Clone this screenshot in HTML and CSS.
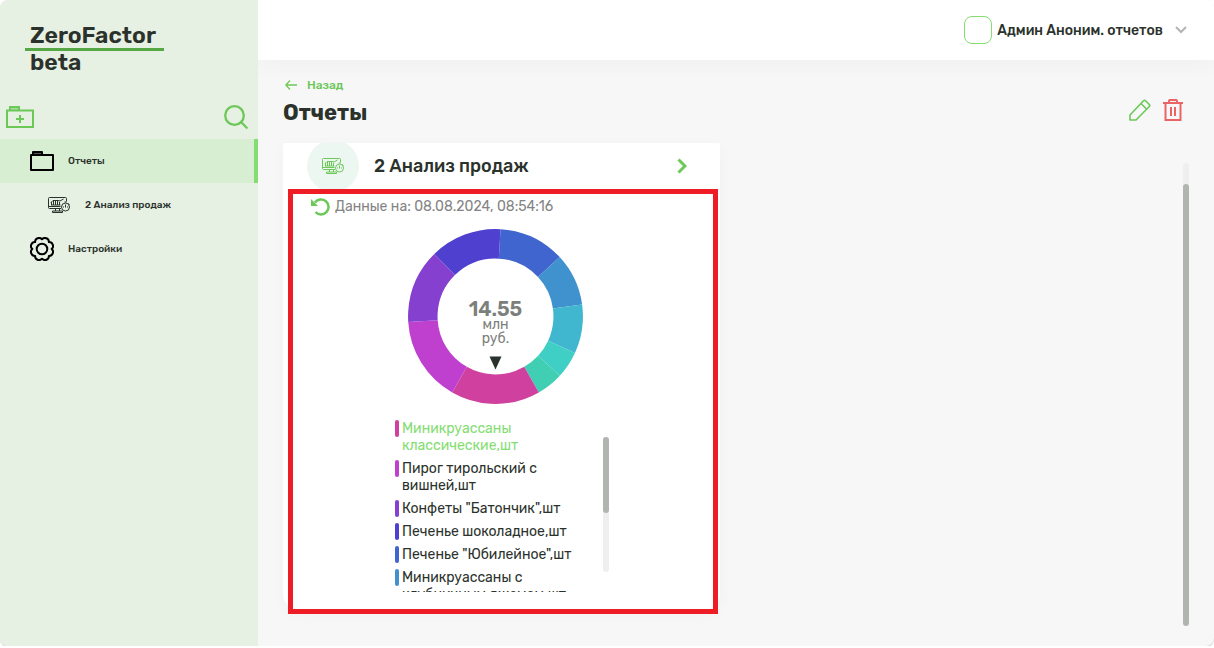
FILE: index.html
```html
<!DOCTYPE html>
<html lang="ru">
<head>
<meta charset="utf-8">
<title>ZeroFactor beta</title>
<link rel="stylesheet" href="styles.css">
</head>
<body>
<svg class="sprite" aria-hidden="true">
  <symbol id="i-analysis" viewBox="0 0 22 16">
    <g fill="none" stroke="currentColor" stroke-width="1">
      <path d="M13 11.500H1.500a1 1 0 0 1-1-1v-9a1 1 0 0 1 1-1h16a1 1 0 0 1 1 1v3M.5 9.500h12M7.500 11.500v2.500M11.500 11.500v2.500M4.500 15.500v-1.500h10v1.500z"/>
      <path d="M3 5.500l2-2h5l2 .500 3.500-2M3.500 8V5M5.500 8V4M7.500 8V4M9.500 8V4M11.500 8V5M3 8h9.500"/>
      <circle cx="17.500" cy="10" r="4"/><path d="M17.500 10.500V7.500M16.500 5h2M15 10h1M19 10h1M20.500 6.500l1 1"/>
    </g>
  </symbol>
</svg>
<div class="app">
  <aside class="sidebar">
    <div class="brand"><span class="brand-name">ZeroFactor</span><span class="brand-tag">beta</span></div>
    <div class="tools">
      <button class="icon-btn" type="button" aria-label="Добавить папку">
        <svg width="28" height="22" viewBox="0 0 28 22"><path d="M4 4V1h9v3z" fill="#a8dd9d"/><path d="M1 4.500h26v16.500H1zM4 4V1h9v3" fill="none" stroke="#6cc857" stroke-width="2"/><path d="M10 13h8M14 9v8" stroke="#6cc857" stroke-width="2"/></svg>
      </button>
      <button class="icon-btn" type="button" aria-label="Поиск">
        <svg width="24" height="24" viewBox="0 0 24 24"><g fill="none" stroke="#6cc857" stroke-width="2.300"><circle cx="10.500" cy="10.500" r="9.300"/><path d="M17 17l5.700 5.700" stroke-linecap="round"/></g></svg>
      </button>
    </div>
    <nav class="menu">
      <a class="menu-item active" href="#">
        <svg width="24" height="20" viewBox="0 0 24 20"><path d="M3 4V1h9v3z" fill="#555"/><path d="M1 4h22v15H1zM3 4V1h9v3" fill="none" stroke="#000" stroke-width="2" stroke-linejoin="round"/></svg>
        <span>Отчеты</span>
      </a>
      <a class="menu-item nested" href="#">
        <svg width="22" height="16"><use href="#i-analysis"/></svg>
        <span>2 Анализ продаж</span>
      </a>
      <a class="menu-item" href="#">
        <svg width="24" height="24" viewBox="0 0 24 24"><g fill="none" stroke="#000" stroke-width="2" stroke-linejoin="round"><circle cx="12" cy="12" r="5.300"/><path d="M12 2.300C14.500-.5 19.100 1.400 18.900 5.100C22.600 4.900 24.500 9.500 21.700 12C24.500 14.500 22.600 19.100 18.900 18.900C19.100 22.600 14.500 24.500 12 21.700C9.500 24.500 4.900 22.600 5.100 18.900C1.400 19.100-.5 14.500 2.300 12C-.5 9.500 1.400 4.900 5.100 5.100C4.900 1.400 9.500-.5 12 2.300Z"/></g></svg>
        <span>Настройки</span>
      </a>
    </nav>
  </aside>
  <div class="content">
    <header class="topbar">
      <button class="user" type="button">
        <span class="avatar"></span>
        <span class="user-name">Админ Аноним. отчетов</span>
        <svg width="12" height="8" viewBox="0 0 12 8"><path d="M1 1l5 5 5-5" fill="none" stroke="#b0b6af" stroke-width="2"/></svg>
      </button>
    </header>
    <main class="page">
      <div class="page-head">
        <div>
          <a class="back" href="#"><svg width="12" height="10" viewBox="0 0 12 10"><path d="M5 .500L.800 5 5 9.500M1 5h11" fill="none" stroke="#6cc857" stroke-width="1.300"/></svg>Назад</a>
          <h1>Отчеты</h1>
        </div>
        <div class="actions">
          <button class="icon-btn" type="button" aria-label="Редактировать">
            <svg width="22" height="22" viewBox="0 0 22 22"><path d="M1 21v-5L14.500 1.700q1-1 2 0l3.800 3.800q1 1 0 2L7 21zM12 4.500l5.700 5.700" fill="none" stroke="#6cc857" stroke-width="1.600" stroke-linejoin="round"/></svg>
          </button>
          <button class="icon-btn" type="button" aria-label="Удалить">
            <svg width="20" height="22" viewBox="0 0 20 22"><g fill="none" stroke="#eb6464" stroke-width="2"><path d="M0 4h20M2.500 4v17h15V4M6 4V2q0-1 1-1h6q1 0 1 1v2M8 8v9M12 8v9"/></g></svg>
          </button>
        </div>
      </div>
      <div class="page-body">
        <section class="card">
          <a class="card-head" href="#">
            <span class="badge"><svg width="22" height="16"><use href="#i-analysis"/></svg></span>
            <span class="card-title">2 Анализ продаж</span>
            <svg width="10" height="16" viewBox="0 0 10 16"><path d="M1.500 1.500L8 8l-6.500 6.500" fill="none" stroke="#6cc857" stroke-width="3"/></svg>
          </a>
          <div class="updated">
            <svg width="20" height="18" viewBox="0 0 20 18"><path d="M4 4.500A7.500 7.500 0 1 1 4.500 14" fill="none" stroke="#6cc857" stroke-width="2.500"/><path d="M0 1v7h7z" fill="#6cc857"/></svg>
            <span>Данные на: 08.08.2024, 08:54:16</span>
          </div>
          <div class="chart">
            <svg class="donut" viewBox="0 0 175 175">
              <g fill="none" stroke-width="29.500" transform="rotate(-86.700 87.500 87.500)">
                <circle cx="87.500" cy="87.500" r="72.700" stroke="#4065cf" pathLength="360" stroke-dasharray="43.900 360"/>
                <circle cx="87.500" cy="87.500" r="72.700" stroke="#4092cf" pathLength="360" stroke-dasharray="34.900 360" stroke-dashoffset="-43.900"/>
                <circle cx="87.500" cy="87.500" r="72.700" stroke="#40b7cf" pathLength="360" stroke-dasharray="32.600 360" stroke-dashoffset="-78.800"/>
                <circle cx="87.500" cy="87.500" r="72.700" stroke="#40cfc5" pathLength="360" stroke-dasharray="18 360" stroke-dashoffset="-111.400"/>
                <circle cx="87.500" cy="87.500" r="72.700" stroke="#40cfb3" pathLength="360" stroke-dasharray="17.600 360" stroke-dashoffset="-129.400"/>
                <circle cx="87.500" cy="87.500" r="72.700" stroke="#cf409f" pathLength="360" stroke-dasharray="59.400 360" stroke-dashoffset="-147"/>
                <circle cx="87.500" cy="87.500" r="72.700" stroke="#bf40cf" pathLength="360" stroke-dasharray="56.600 360" stroke-dashoffset="-206.400"/>
                <circle cx="87.500" cy="87.500" r="72.700" stroke="#8540cf" pathLength="360" stroke-dasharray="49.300 360" stroke-dashoffset="-263"/>
                <circle cx="87.500" cy="87.500" r="72.700" stroke="#4f40cf" pathLength="360" stroke-dasharray="47.700 360" stroke-dashoffset="-312.300"/>
              </g>
              <path d="M81.500 127.500h12l-6 13z" fill="#2b322b"/>
            </svg>
            <div class="total"><strong>14.55</strong><span>млн<br>руб.</span></div>
          </div>
          <div class="legend-wrap">
            <ul class="legend">
              <li class="c1 current">Миникруассаны классические,шт</li>
              <li class="c2">Пирог тирольский с вишней,шт</li>
              <li class="c3">Конфеты "Батончик",шт</li>
              <li class="c4">Печенье шоколадное,шт</li>
              <li class="c5">Печенье "Юбилейное",шт</li>
              <li class="c6">Миникруассаны с клубничным джемом,шт</li>
            </ul>
            <div class="track legend-track"><div class="thumb"></div></div>
          </div>
          <div class="highlight"></div>
        </section>
        <div class="track page-track"><div class="thumb"></div></div>
      </div>
    </main>
  </div>
</div>
</body>
</html>
```
FILE: styles.css
```css
* { box-sizing: border-box; }
body {
  margin: 0;
  background: #fff;
  color: #2b322b;
  font-family: Rubik, Roboto, "Liberation Sans", sans-serif;
  font-size: 14px;
}
button { font: inherit; color: inherit; background: none; border: 0; padding: 0; cursor: pointer; }
a { color: inherit; text-decoration: none; }
svg { display: block; flex: none; }
.sprite { display: none; }

.app {
  display: flex;
  height: calc(100vh - 2px);
  border-radius: 8px;
  overflow: hidden;
  background: #f7f7f7;
  box-shadow: 0 1px 1px #ccc;
}
.sidebar { position: relative; z-index: 1; width: 258px; flex: none; background: #e6f0e3; }
.brand {
  display: flex;
  flex-direction: column;
  align-items: flex-start;
  padding: 22px 25px 0;
  font-size: 23px;
  line-height: 26px;
  font-weight: 600;
}
.brand-name { padding: 0 8px 0 5px; border-bottom: 3px solid #56a846; }
.brand-tag { padding-left: 5px; line-height: 22px; }
.tools { display: flex; justify-content: space-between; align-items: center; padding: 32px 10px 10px 6px; }
.menu-item {
  display: flex;
  align-items: center;
  gap: 14px;
  height: 44px;
  padding-left: 30px;
  font-size: 10px;
  font-weight: 500;
}
.menu-item.active { background: linear-gradient(#84dd72, #84dd72) right / 4px 100% no-repeat #d8eed3; }
.menu-item.nested { padding-left: 48px; gap: 15px; }

.content { flex: 1; min-width: 0; display: flex; flex-direction: column; }
.topbar {
  display: flex;
  justify-content: flex-end;
  align-items: center;
  height: 60px;
  padding-right: 27px;
  background: #fff;
  box-shadow: 0 4px 24px rgba(0, 0, 0, .04);
}
.user { display: flex; align-items: center; font-weight: 500; }
.avatar { width: 28px; height: 28px; margin-right: 5px; border: 1px solid #84dd72; border-radius: 8px; }
.user-name { margin-right: 12px; }

.page { flex: 1; min-height: 0; display: flex; flex-direction: column; padding: 17px 25px 20px; }
.page-head { display: flex; justify-content: space-between; align-items: flex-end; padding-right: 6px; }
.back { display: flex; align-items: center; gap: 10px; padding-left: 2px; color: #6cc857; font-size: 12px; line-height: 16px; font-weight: 500; }
h1 { margin: 6px 0 0; font-size: 22px; line-height: 28px; font-weight: 700; }
.actions { display: flex; align-items: center; gap: 12px; padding-bottom: 6px; }
.page-body { flex: 1; min-height: 0; display: flex; justify-content: space-between; align-items: flex-start; padding-top: 16px; }

.card {
  position: relative;
  width: 437px;
  padding-bottom: 18px;
  background: #fff;
  border-radius: 0 0 16px 16px;
  box-shadow: 0 4px 16px rgba(0, 0, 0, .03);
}
.card-head { display: flex; align-items: center; height: 46px; padding: 0 33px 0 24px; overflow: hidden; }
.badge { display: flex; align-items: center; justify-content: center; width: 52px; height: 52px; margin-right: 15px; background: #edf7f2; border-radius: 50%; color: #6cc857; }
.card-title { flex: 1; font-size: 18px; font-weight: 500; }
.updated { display: flex; align-items: center; gap: 4px; padding: 8px 28px 0; color: #848484; line-height: 20px; }
.chart { position: relative; width: 175px; margin: 12px auto 0 125px; }
.donut { width: 100%; height: auto; }
.total {
  position: absolute;
  top: 71px;
  left: 0;
  right: 0;
  display: flex;
  flex-direction: column;
  align-items: center;
  text-align: center;
  color: #7c807b;
  line-height: 14px;
}
.total strong { font-size: 20px; line-height: 18px; font-weight: 600; }
.legend-wrap { display: flex; justify-content: space-between; width: 214px; height: 172px; margin: 16px 0 0 112px; }
.legend {
  display: flex;
  flex-direction: column;
  gap: 6px;
  width: 186px;
  margin: 0;
  padding: 0;
  overflow: hidden;
  list-style: none;
  line-height: 17px;
}
.legend li { position: relative; flex: none; padding-left: 7px; }
.legend li::before { content: ""; position: absolute; left: 0; top: 0; width: 4px; height: 17px; border-radius: 2px; background: currentColor; }
.legend .current { color: #84dd72; }
.legend .c1::before { background: #cf409f; }
.legend .c2::before { background: #bf40cf; }
.legend .c3::before { background: #8540cf; }
.legend .c4::before { background: #4f40cf; }
.legend .c5::before { background: #4065cf; }
.legend .c6::before { background: #4092cf; }
.track { width: 6px; border-radius: 3px; background: #efefef; }
.thumb { border-radius: 3px; background: #b0b6af; }
.legend-track { height: 135px; margin-top: 17px; }
.legend-track .thumb { height: 76px; }
.page-track { align-self: stretch; margin-top: 20px; padding-top: 21px; }
.page-track .thumb { height: 100%; }
.highlight { position: absolute; top: 46px; right: 2px; bottom: -4px; left: 5px; border: 5px solid #ee1c24; pointer-events: none; }
```
